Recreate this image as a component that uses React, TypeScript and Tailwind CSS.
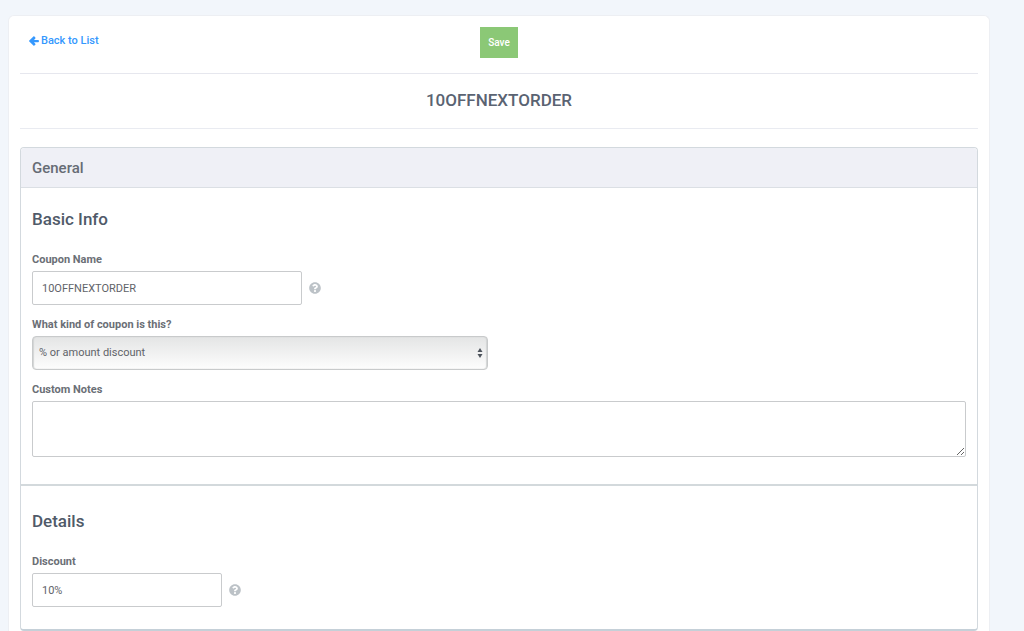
import { useState, type ReactNode } from "react";
import { FaQuestionCircle } from "react-icons/fa";

const labelClass = "mb-[3px] block text-[11px] leading-4 font-bold text-[#6b6f76]";
const boxClass =
  "rounded-[2px] border border-[#c9cbcd] bg-white text-[11px] text-[#5f6369] outline-none focus:border-[#3598fe]";

function Field({ id, label, children }: { id: string; label: string; children: ReactNode }) {
  return (
    <div>
      <label htmlFor={id} className={labelClass}>
        {label}
      </label>
      <div className="flex items-center gap-[7px]">{children}</div>
    </div>
  );
}

function Help({ about }: { about: string }) {
  return (
    <button type="button" aria-label={`Help: ${about}`} className="text-[#bcc2c7]">
      <FaQuestionCircle className="size-3" />
    </button>
  );
}

function SectionTitle({ children }: { children: ReactNode }) {
  return <h2 className="mb-[21px] text-[17px] leading-6 font-medium text-[#505a69]">{children}</h2>;
}

export default function App() {
  const [name, setName] = useState("10OFFNEXTORDER");
  const [discount, setDiscount] = useState("10%");

  return (
    <div className="flex min-h-screen flex-col bg-[#f2f6fb] pt-[15px] pr-[34px] pl-2 font-['Roboto',sans-serif]">
      <main className="grow rounded-t-md border border-b-0 border-[#edeff3] bg-white px-[11px]">
        <header className="grid grid-cols-[1fr_auto_1fr] items-start border-b border-[#e6e7ee] pt-[11px] pb-[15px]">
          <a href="#list" className="flex items-center gap-0.5 pt-1.5 pl-[9px] text-[11px] leading-4 font-medium text-[#3598fe]">
            <svg viewBox="0 0 10 10" aria-hidden="true" className="size-[10px] fill-current">
              <path d="M5.4.5 6.3 1.4c.3.3.3.7 0 1L5 3.9h4.2c.4 0 .7.3.7.7v.9c0 .4-.3.7-.7.7H5l1.3 1.5c.3.3.3.7 0 1l-.9.9c-.3.3-.7.3-1 0L.3 5.5a.7.7 0 0 1 0-1L4.4.5c.3-.3.7-.3 1 0z" />
            </svg>
            Back to List
          </a>
          <button type="submit" form="coupon" className="h-[31px] bg-[#8bc876] px-2 text-[10px] font-medium text-white">
            Save
          </button>
        </header>

        <h1 className="border-b border-[#e9ebf1] pt-[14px] pb-4 text-center text-[17px] leading-6 font-medium text-[#5a6372]">
          10OFFNEXTORDER
        </h1>

        <form
          id="coupon"
          onSubmit={(event) => event.preventDefault()}
          className="mt-[18px] rounded border border-b-2 border-[#d3d9de] border-b-[#c5d0d8]"
        >
          <div className="rounded-t border-b border-[#dbdfe4] bg-[#eff0f6] px-[11px] pt-2 pb-[7px] text-[15px] leading-6 font-medium text-[#666c75]">
            General
          </div>

          <section className="border-b-2 border-[#d3d9dc] px-[11px] pt-[19px] pb-[27px]">
            <SectionTitle>Basic Info</SectionTitle>
            <div className="flex flex-col gap-3">
              <Field id="name" label="Coupon Name">
                <input
                  id="name"
                  value={name}
                  onChange={(event) => setName(event.target.value)}
                  className={`${boxClass} h-[34px] w-[270px] px-[9px]`}
                />
                <Help about="coupon name" />
              </Field>
              <Field id="kind" label="What kind of coupon is this?">
                <div className="relative w-[456px]">
                  <select
                    id="kind"
                    className="block h-[34px] w-full appearance-none rounded border border-[#c8cacb] bg-linear-to-b from-[#e4e5e5] to-[#fdfdfd] px-1.5 text-[11px] text-[#5f6369] shadow-[inset_1px_0_1px_#d2d4d4,inset_-1px_0_1px_#d2d4d4] outline-none"
                  >
                    <option>% or amount discount</option>
                  </select>
                  <svg
                    viewBox="0 0 6 10"
                    aria-hidden="true"
                    className="pointer-events-none absolute top-3 right-[5px] h-[10px] w-[6px] fill-[#4d535c]"
                  >
                    <path d="M3 0 5.5 4h-5zM3 10 .5 6h5z" />
                  </svg>
                </div>
              </Field>
              <Field id="notes" label="Custom Notes">
                <textarea id="notes" className={`${boxClass} block h-14 w-full resize px-[9px] py-2`} />
              </Field>
            </div>
          </section>

          <section className="px-[11px] pt-[23px] pb-[22px]">
            <SectionTitle>Details</SectionTitle>
            <Field id="discount" label="Discount">
              <input
                id="discount"
                value={discount}
                onChange={(event) => setDiscount(event.target.value)}
                className={`${boxClass} h-[34px] w-[190px] px-[9px]`}
              />
              <Help about="discount" />
            </Field>
          </section>
        </form>
      </main>
    </div>
  );
}
